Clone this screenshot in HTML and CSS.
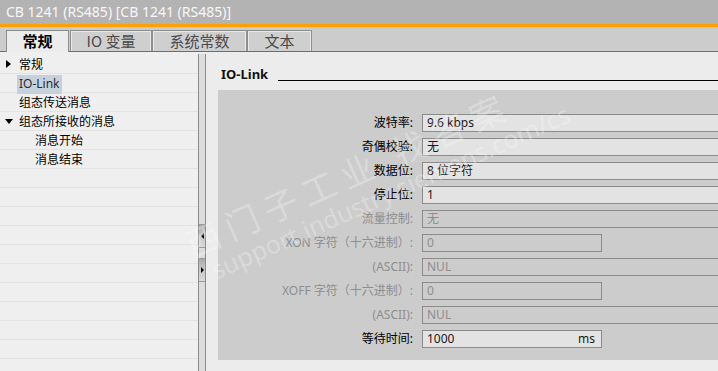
FILE: index.html
```html
<!DOCTYPE html>
<html lang="zh">
<head>
<meta charset="utf-8">
<title>CB 1241 (RS485)</title>
<link rel="stylesheet" href="styles.css">
</head>
<body>
<div class="window">
  <div class="titlebar">CB 1241 (RS485) [CB 1241 (RS485)]</div>
  <div class="accent"></div>
  <div class="tabbar">
    <div class="tab active t-gen">常规</div>
    <div class="tab t-io">IO 变量</div>
    <div class="tab t-sys">系统常数</div>
    <div class="tab t-text">文本</div>
  </div>
  <div class="main">
    <div class="tree">
      <div class="row"><span class="tw tw-right"></span>常规</div>
      <div class="row"><span class="sel">IO-Link</span></div>
      <div class="row">组态传送消息</div>
      <div class="row"><span class="tw tw-down"></span>组态所接收的消息</div>
      <div class="row sub">消息开始</div>
      <div class="row sub">消息结束</div>
    </div>
    <div class="splitter">
      <div class="sbtn"><span class="arr arr-left"></span></div>
      <div class="sbtn"><span class="arr arr-right"></span></div>
    </div>
    <div class="content">
      <div class="heading"><span class="htext">IO-Link</span><span class="rule"></span></div>
      <div class="box">
        <div class="form">
          <div class="lbl">波特率:</div>
          <div class="fld full">9.6 kbps</div>

          <div class="lbl">奇偶校验:</div>
          <div class="fld full">无</div>

          <div class="lbl">数据位:</div>
          <div class="fld full">8 位字符</div>

          <div class="lbl">停止位:</div>
          <div class="fld full">1</div>

          <div class="lbl dis">流量控制:</div>
          <div class="fld full dis">无</div>

          <div class="lbl dis">XON 字符（十六进制）:</div>
          <div class="fld dis">0</div>

          <div class="lbl dis">(ASCII):</div>
          <div class="fld full dis">NUL</div>

          <div class="lbl dis">XOFF 字符（十六进制）:</div>
          <div class="fld dis">0</div>

          <div class="lbl dis">(ASCII):</div>
          <div class="fld full dis">NUL</div>

          <div class="lbl">等待时间:</div>
          <div class="fld unit"><span>1000</span><span>ms</span></div>
        </div>
      </div>
    </div>
  </div>
  <div class="watermark">
    <div class="wm-cn">西门子工业 找答案</div>
    <div class="wm-en">support.industry.siemens.com/cs</div>
  </div>
</div>
</body>
</html>
```

FILE: styles.css
```css
* { box-sizing: border-box; }

html, body {
  margin: 0;
  padding: 0;
}

body {
  width: 718px;
  height: 371px;
  overflow: hidden;
  background: #ececec;
  font-family: "Noto Sans", "Noto Sans CJK SC", sans-serif;
  color: #000;
}

.window {
  position: relative;
  width: 718px;
  height: 371px;
  display: flex;
  flex-direction: column;
  overflow: hidden;
}

.titlebar {
  height: 24px;
  background: #b3b3b3;
  color: #f7f7f7;
  font-size: 14px;
  line-height: 24px;
  padding-left: 6px;
  white-space: nowrap;
}

.accent {
  height: 3px;
  background: #ffa000;
}

.tabbar {
  height: 25px;
  background: #cccccc;
  border-bottom: 1px solid #6e6e6e;
  display: flex;
  align-items: flex-end;
  padding-left: 6px;
}

.tab {
  height: 21px;
  border: 1px solid #8e8e8e;
  border-bottom: none;
  background: #cfcfcf;
  box-shadow: inset 1px 1px 0 #e9e9e9, inset -1px 0 0 #e9e9e9;
  font-size: 15px;
  line-height: 19px;
  text-align: center;
  color: #4a4a4a;
  font-family: "Noto Sans CJK SC", "Noto Sans", sans-serif;
}

.tab.active {
  height: 22px;
  margin-bottom: -1px;
  background: #ececec;
  box-shadow: none;
  color: #000;
  font-weight: bold;
  line-height: 20px;
}

.t-gen { width: 63px; margin-right: 1px; }
.t-io { width: 82px; }
.t-sys { width: 95px; }
.t-text { width: 65px; }

.main {
  flex: 1;
  display: flex;
  min-height: 0;
}

.tree {
  width: 198px;
  padding-top: 3px;
  background-color: #efefef;
  background-image: repeating-linear-gradient(to bottom, transparent 0 18px, #e3e3e3 18px 19px);
  background-position: 0 3px;
  font-size: 12px;
  font-family: "Noto Sans CJK SC", "Noto Sans", sans-serif;
}

.row {
  height: 19px;
  line-height: 18px;
  padding-left: 19px;
  position: relative;
  white-space: nowrap;
}

.row.sub { padding-left: 35px; }

.sel {
  display: inline-block;
  height: 19px;
  margin-left: -2px;
  padding: 0 2px;
  background: #c6d1dc;
  color: #2a2a3a;
  font-family: "Noto Sans", sans-serif;
}

.tw {
  position: absolute;
  width: 0;
  height: 0;
}

.tw-right {
  left: 6px;
  top: 5px;
  border-top: 4px solid transparent;
  border-bottom: 4px solid transparent;
  border-left: 5px solid #000;
}

.tw-down {
  left: 5px;
  top: 7px;
  border-left: 4px solid transparent;
  border-right: 4px solid transparent;
  border-top: 5px solid #000;
}

.splitter {
  width: 8px;
  margin-top: 2px;
  border-left: 1px solid #8a8a8a;
  border-right: 1px solid #8a8a8a;
  background: #dddddd;
  display: flex;
  flex-direction: column;
  padding-top: 170px;
  gap: 10px;
}

.sbtn {
  height: 24px;
  background: linear-gradient(to bottom, #a9a9a9 0, #c4c4c4 40%, #d9d9d9 100%);
  border-top: 1px solid #9a9a9a;
  border-bottom: 1px solid #9a9a9a;
  display: flex;
  align-items: center;
  justify-content: center;
}

.arr { width: 0; height: 0; }

.arr-left {
  border-top: 3px solid transparent;
  border-bottom: 3px solid transparent;
  border-right: 3px solid #000;
}

.arr-right {
  border-top: 3px solid transparent;
  border-bottom: 3px solid transparent;
  border-left: 3px solid #000;
}

.content {
  flex: 1;
  padding-top: 14px;
  background: #ececec;
  min-width: 0;
}

.heading {
  display: flex;
  align-items: flex-start;
  height: 16px;
  padding-left: 15px;
}

.htext {
  font-size: 13px;
  font-weight: bold;
  line-height: 16px;
  color: #111;
  font-family: "Noto Sans", sans-serif;
}

.rule {
  flex: 1;
  margin-left: 10px;
  margin-top: 14px;
  border-top: 1px solid #000;
}

.box {
  margin: 8px 0 0 12px;
  height: 270px;
  background: #cccccc;
  padding-top: 24px;
}

.form {
  display: grid;
  grid-template-columns: 195px 180px 1fr;
  grid-auto-rows: 18px;
  row-gap: 6px;
  column-gap: 9px;
  margin-right: -20px;
}

.lbl {
  grid-column: 1;
  text-align: right;
  font-size: 12px;
  line-height: 18px;
  white-space: nowrap;
  color: #000;
  font-family: "Noto Sans", "Noto Sans CJK SC", sans-serif;
}

.lbl.dis { color: #8e8e8e; }

.fld {
  grid-column: 2;
  height: 18px;
  border: 1px solid #8c8c8c;
  background: #e3e3e3;
  font-size: 12px;
  line-height: 16px;
  padding-left: 4px;
  color: #1a1a1a;
  white-space: nowrap;
  font-family: "Noto Sans", "Noto Sans CJK SC", sans-serif;
}

.fld.full { grid-column: 2 / 4; }

.fld.dis {
  background: #cccccc;
  color: #8e8e8e;
}

.fld.unit {
  display: flex;
  justify-content: space-between;
  padding-right: 6px;
}

.watermark {
  position: absolute;
  left: 180px;
  top: 228px;
  transform: rotate(-24deg);
  transform-origin: 0 0;
  color: rgba(255, 255, 255, 0.28);
  pointer-events: none;
  white-space: nowrap;
}

.wm-cn {
  font-family: "Noto Sans CJK SC", sans-serif;
  font-size: 34px;
  line-height: 38px;
  letter-spacing: 8px;
}

.wm-en {
  font-family: "Noto Sans", sans-serif;
  font-size: 25px;
  line-height: 28px;
  margin-left: 12px;
}
```
